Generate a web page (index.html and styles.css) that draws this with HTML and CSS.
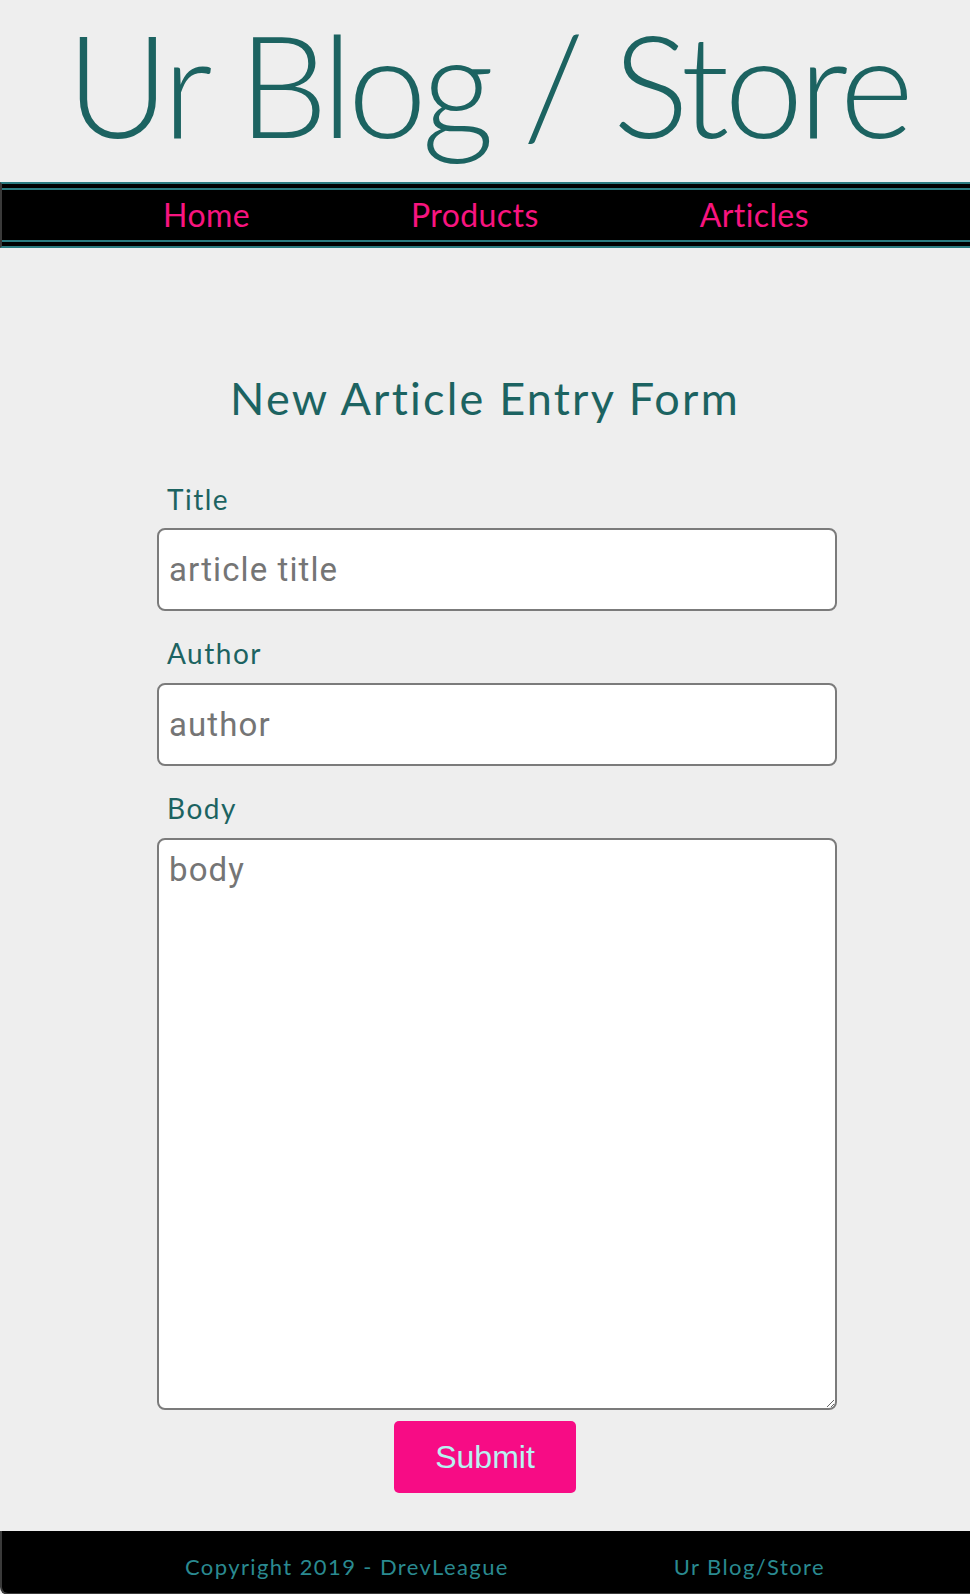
FILE: index.html
```html
<!DOCTYPE html>
<html lang="en">
<head>
<meta charset="utf-8">
<title>Ur Blog / Store</title>
<link rel="stylesheet" href="styles.css">
</head>
<body>
<header class="site-header">
  <h1 class="site-title">Ur Blog / Store</h1>
</header>
<nav class="site-nav">
  <ul class="nav-list">
    <li><a class="nav-link" href="#">Home</a></li>
    <li><a class="nav-link" href="#">Products</a></li>
    <li><a class="nav-link" href="#">Articles</a></li>
  </ul>
</nav>
<main class="content">
  <h2 class="form-heading">New Article Entry Form</h2>
  <form class="entry-form">
    <label class="field-label first" for="title">Title</label>
    <input class="field-input" id="title" type="text" placeholder="article title">
    <label class="field-label" for="author">Author</label>
    <input class="field-input" id="author" type="text" placeholder="author">
    <label class="field-label" for="body">Body</label>
    <textarea class="field-area" id="body" placeholder="body"></textarea>
  </form>
  <div class="actions">
    <button class="submit-btn" type="button">Submit</button>
  </div>
</main>
<footer class="site-footer">
  <span class="footer-item">Copyright 2019 - DrevLeague</span>
  <span class="footer-item">Ur Blog/Store</span>
</footer>
</body>
</html>
```

FILE: styles.css
```css
* { box-sizing: border-box; }

html, body {
  margin: 0;
  padding: 0;
  background: #eeeeee;
}

body {
  font-family: Lato, "Open Sans", sans-serif;
  color: #1c6361;
  overflow-x: hidden;
}

.site-header {
  height: 182px;
  padding-top: 12px;
  text-align: center;
}

.site-title {
  margin: 0 0 0 5px;
  font-family: Lato, sans-serif;
  font-weight: 300;
  font-size: 142px;
  line-height: 1;
  letter-spacing: -5px;
  color: #1c6361;
  white-space: nowrap;
  display: inline-block;
}

.site-nav {
  background: #000;
  border-top: 2px solid #2b7b80;
  border-bottom: 2px solid #2b7b80;
  border-left: 2px solid #3a3a3a;
  padding: 4px 0;
}

.nav-list {
  list-style: none;
  margin: 0;
  padding: 0;
  display: flex;
  justify-content: space-evenly;
  border-top: 2px solid #2b7b80;
  border-bottom: 2px solid #2b7b80;
  height: 54px;
}

.nav-link {
  display: block;
  line-height: 50px;
  font-size: 32px;
  letter-spacing: 0.4px;
  color: #f8147f;
  text-decoration: none;
}

.content {
  padding-top: 120px;
  padding-bottom: 38px;
}

.form-heading {
  margin: 0;
  text-align: center;
  font-weight: 400;
  font-size: 45px;
  line-height: 60px;
  letter-spacing: 2.2px;
  color: #1c6361;
}

.entry-form {
  width: 680px;
  margin-left: calc(50% - 328px);
  padding-top: 53px;
  display: flex;
  flex-direction: column;
}

.field-label {
  display: block;
  padding-left: 10px;
  font-size: 28px;
  line-height: 36px;
  letter-spacing: 1.5px;
  margin-top: 24px;
  margin-bottom: 12px;
  color: #1c6361;
}

.field-label.first {
  margin-top: 0;
  margin-bottom: 11px;
}

.field-input,
.field-area {
  display: block;
  width: 680px;
  background: #fff;
  border: 2px solid #7b7b7b;
  border-radius: 8px;
  font-family: Roboto, "Liberation Sans", sans-serif;
  font-size: 33px;
  letter-spacing: 1.1px;
  color: #333;
  outline: none;
}

.field-input {
  height: 83px;
  padding: 0 10px;
}

.field-area {
  height: 572px;
  padding: 10px 10px;
  resize: vertical;
}

.field-input::placeholder,
.field-area::placeholder {
  color: #757575;
  opacity: 1;
}

.actions {
  display: flex;
  justify-content: center;
  padding-top: 11px;
}

.submit-btn {
  width: 182px;
  height: 72px;
  border: none;
  border-radius: 5px;
  background: #f70c85;
  color: #b8f2f2;
  font-family: "Liberation Sans", Arial, sans-serif;
  font-size: 32px;
  cursor: pointer;
}

.site-footer {
  height: 64px;
  background: #000;
  border-left: 2px solid #3a3a3a;
  border-bottom: 2px solid #3a3a3a;
  border-bottom-left-radius: 8px;
  padding-top: 10px;
  margin-right: -20px;
  padding-left: 18px;
  display: flex;
  justify-content: space-evenly;
}

.footer-item {
  font-size: 22px;
  line-height: 52px;
  letter-spacing: 1.4px;
  color: #2a8a90;
}
```
